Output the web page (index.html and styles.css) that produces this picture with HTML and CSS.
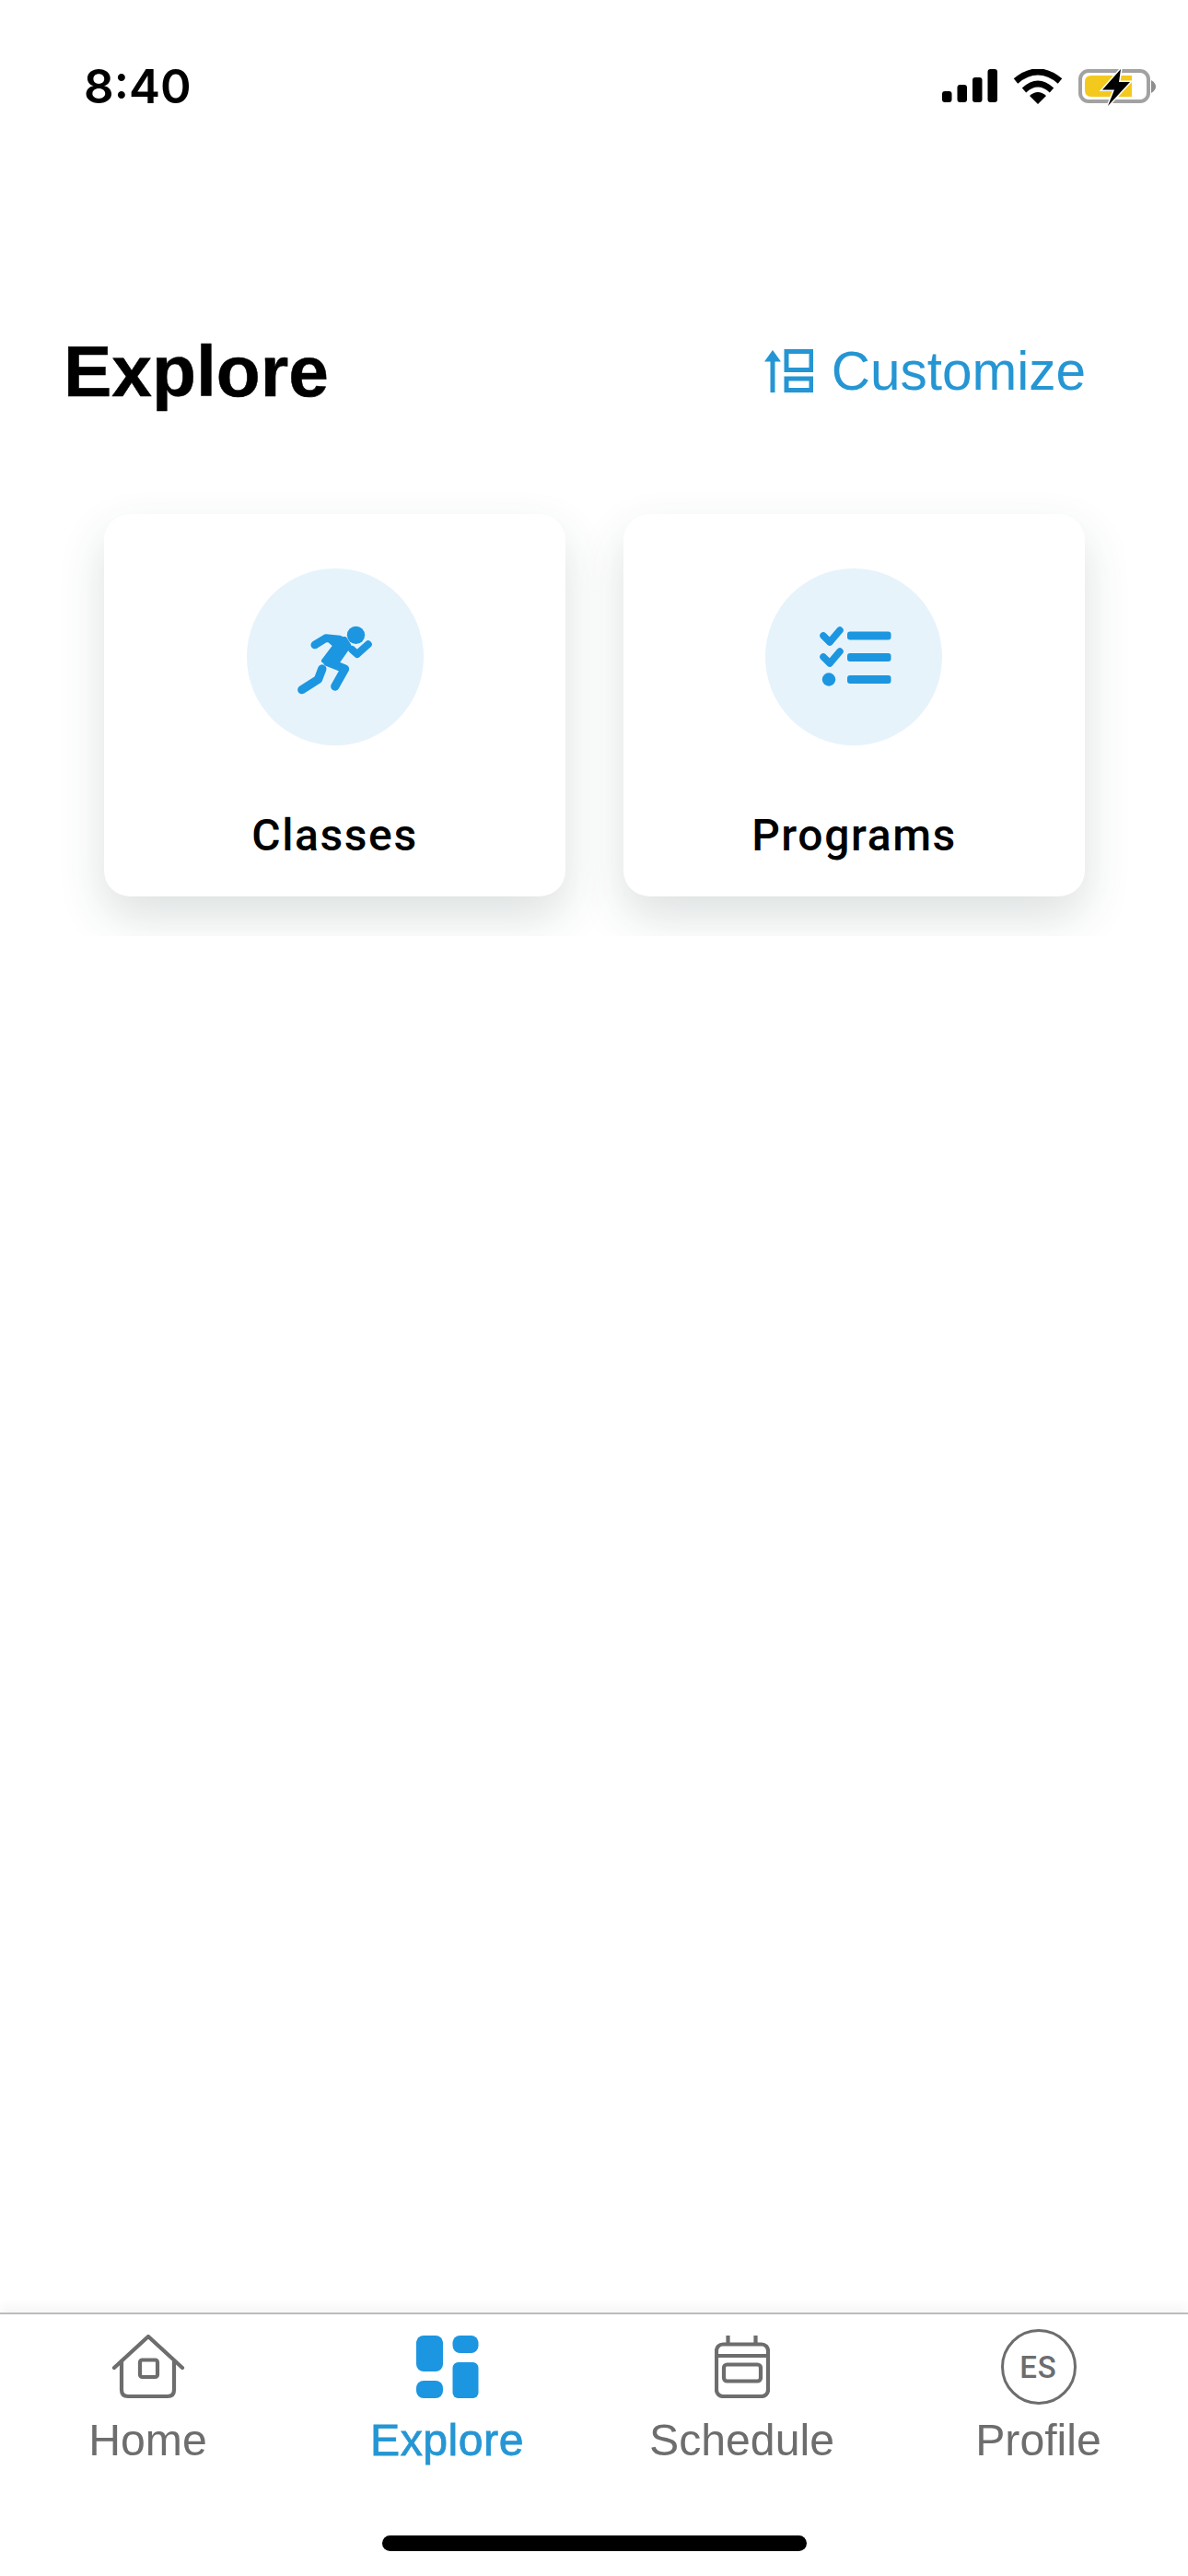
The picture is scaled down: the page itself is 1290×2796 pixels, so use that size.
FILE: index.html
```html
<!DOCTYPE html>
<html lang="en">
<head>
<meta charset="utf-8">
<title>Explore</title>
<link rel="stylesheet" href="styles.css">
</head>
<body>
<div class="page">
  <header class="status">
    <span class="time">8:40</span>
    <div class="status-icons">
      <svg class="signal" width="60" height="36" viewBox="0 0 60 36"><rect x="0" y="24" width="10.5" height="12" rx="3"/><rect x="16.500" y="17" width="10.500" height="19" rx="3"/><rect x="33" y="9" width="10.500" height="27" rx="3"/><rect x="49.500" y="0" width="10.500" height="36" rx="3"/></svg>
      <svg class="wifi" width="54" height="38" viewBox="0 0 54 38"><path d="M3 13Q27 -7 51 13" fill="none" stroke="#000" stroke-width="7"/><path d="M12 23Q27 9 42 23" fill="none" stroke="#000" stroke-width="6.500"/><path d="M18 29Q27 21 36 29L27 38Z"/></svg>
      <svg class="battery" width="85" height="40" viewBox="0 0 85 40"><rect x="2" y="2" width="74" height="33" rx="9" fill="none" stroke="#a2a2a2" stroke-width="4"/><path d="M7 14Q7 7 14 7H58V30H14Q7 30 7 23Z" fill="#f4c91e"/><path d="M79 12Q84 15 84 19Q84 23 79 26Z" fill="#8d8d8d"/><path d="M46 0L26 22.500H39L32 40L56 14H44L46 0Z" stroke="#fff" stroke-width="3" paint-order="stroke"/></svg>
    </div>
  </header>

  <section class="title-row">
    <h1 class="title">Explore</h1>
    <a class="customize">
      <svg class="customize-icon" width="54" height="47" viewBox="0 0 54 47" fill="none" stroke="#2596d3" stroke-width="5"><path d="M10 47V8"/><path d="M1 13.500L10 1L19 13.500Z" fill="#2596d3" stroke="none"/><rect x="25" y="2.500" width="27" height="20"/><rect x="25" y="32" width="27" height="12.500"/></svg>
      <span>Customize</span>
    </a>
  </section>

  <section class="cards-clip">
    <div class="cards">
      <article class="card">
        <div class="disc">
          <svg width="192" height="192" viewBox="0 0 192 192">
            <g transform="translate(32.500 43) scale(.3333)" fill="none" stroke="#1c96e0" stroke-linecap="round" stroke-linejoin="round">
              <circle cx="258" cy="88" r="29" fill="#1c96e0" stroke="none"/>
              <path d="M124 120L160 98L205 102" stroke-width="26"/>
              <path d="M165 100L222 100L236 122L192 185L152 172L190 122Z" fill="#1c96e0" stroke-width="14"/>
              <path d="M165 175L222 198L190 255" stroke-width="28"/>
              <path d="M148 198L135 232L82 266" stroke-width="28"/>
              <path d="M245 135L262 150L298 118" stroke-width="24"/>
            </g>
          </svg>
        </div>
        <h2 class="card-label">Classes</h2>
      </article>
      <article class="card">
        <div class="disc disc-shifted">
          <svg width="192" height="192" viewBox="0 0 192 192" fill="#1c96e0">
            <path d="M63 73L70 80L81 67" fill="none" stroke="#1c96e0" stroke-width="7.500" stroke-linecap="round" stroke-linejoin="round"/>
            <path d="M63 96L70 103L81 90" fill="none" stroke="#1c96e0" stroke-width="7.500" stroke-linecap="round" stroke-linejoin="round"/>
            <circle cx="69" cy="120.500" r="7.200"/>
            <rect x="89" y="68.500" width="47.500" height="9" rx="3"/>
            <rect x="89" y="92" width="47.500" height="9" rx="3"/>
            <rect x="89" y="116" width="47.500" height="9" rx="3"/>
          </svg>
        </div>
        <h2 class="card-label">Programs</h2>
      </article>
    </div>
  </section>

  <div class="spacer"></div>

  <nav class="tabs">
    <a class="tab">
      <span class="tab-icon">
        <svg width="80" height="70" viewBox="0 0 80 70" fill="none" stroke="#6d6d6d" stroke-width="4.200" stroke-linecap="round" stroke-linejoin="round"><path d="M3 36L40 2L77 36"/><path d="M11 29V60Q11 67 18 67H61Q68 67 68 60V29"/><rect x="31" y="27.500" width="19" height="18.500" rx="2.500"/></svg>
      </span>
      <span class="tab-label">Home</span>
    </a>
    <a class="tab tab-active">
      <span class="tab-icon">
        <svg width="68" height="68" viewBox="0 0 68 68" fill="#1c96e0"><rect x="0" y="0" width="29" height="39" rx="8"/><rect x="0" y="49" width="29" height="19" rx="8"/><rect x="39.500" y="0" width="28" height="19" rx="8"/><rect x="39.500" y="29" width="28" height="39" rx="6"/></svg>
      </span>
      <span class="tab-label">Explore</span>
    </a>
    <a class="tab">
      <span class="tab-icon">
        <svg width="60" height="68" viewBox="0 0 60 68" fill="none" stroke="#6d6d6d" stroke-width="4.200" stroke-linejoin="round"><rect x="2" y="9.500" width="56" height="56.500" rx="7"/><path d="M2 22H58"/><path d="M14.500 0V9M44.500 0V9"/><rect x="10" y="31.500" width="40" height="18" rx="3.500"/></svg>
      </span>
      <span class="tab-label">Schedule</span>
    </a>
    <a class="tab tab-last">
      <span class="tab-icon">
        <span class="avatar">ES</span>
      </span>
      <span class="tab-label">Profile</span>
    </a>
  </nav>

  <footer class="home-row"><div class="home-bar"></div></footer>
</div>
</body>
</html>
```

FILE: styles.css
```css
* { box-sizing: border-box; }

html, body { margin: 0; padding: 0; background: #fff; }

.page {
  width: 1290px;
  height: 2796px;
  display: flex;
  flex-direction: column;
  overflow: hidden;
  font-family: "Liberation Sans", Arial, sans-serif;
}

.status {
  height: 180px;
  padding: 73px 34px 0 91px;
  display: flex;
  justify-content: space-between;
  align-items: flex-start;
}

.time {
  font-family: Inter, sans-serif;
  font-weight: 600;
  font-size: 51px;
  line-height: 42px;
  color: #000;
}

.status-icons {
  display: flex;
  align-items: flex-start;
  gap: 17px;
  padding-top: 2px;
}

.title-row {
  height: 350px;
  padding: 180px 111px 0 69px;
  display: flex;
  justify-content: space-between;
  align-items: flex-start;
}

.title {
  margin: 0;
  font-size: 78.500px;
  font-weight: 700;
  line-height: 86px;
  color: #000;
  -webkit-text-stroke: 0.5px #000;
}

.customize {
  display: flex;
  align-items: center;
  gap: 20px;
  height: 84px;
  color: #2596d3;
  font-size: 58.500px;
}

.cards-clip {
  height: 486px;
  padding-top: 28px;
  overflow: hidden;
}

.cards {
  display: flex;
  gap: 63px;
  padding: 0 112px 0 113px;
}

.card {
  width: 501px;
  height: 415px;
  padding-top: 59px;
  border-radius: 28px;
  background: #fff;
  box-shadow: 0 22px 50px rgba(40, 70, 60, 0.16);
  display: flex;
  flex-direction: column;
  align-items: center;
}

.disc {
  width: 192px;
  height: 192px;
  border-radius: 50%;
  background: #e6f3fb;
}

.disc-shifted { margin-right: 2px; }

.disc svg { display: block; }

.card-label {
  margin: 71px 0 0;
  font-family: Roboto, sans-serif;
  font-size: 48px;
  font-weight: 500;
  line-height: 54px;
  letter-spacing: 1.6px;
  color: #000;
}

.spacer { flex: 1; }

.tabs {
  height: 226px;
  border-top: 2px solid #bdbdbd;
  box-shadow: 0 -8px 10px rgba(0, 0, 0, 0.035);
  display: grid;
  grid-template-columns: 321px 329px 311px 329px;
  background: #fff;
}

.tab {
  display: flex;
  flex-direction: column;
  align-items: center;
  color: #6d6d6d;
}

.tab-last { padding-left: 4px; }

.tab-icon {
  margin-top: 15px;
  height: 84px;
  display: flex;
  align-items: center;
  justify-content: center;
}

.tab-label {
  margin-top: 10px;
  font-size: 48.200px;
  line-height: 54px;
}

.tab-active { color: #2596d3; }
.tab-active .tab-label {
  letter-spacing: 0.5px;
  -webkit-text-stroke: 0.8px #2596d3;
}

.avatar {
  width: 82px;
  height: 82px;
  border: 3.500px solid #6d6d6d;
  border-radius: 50%;
  display: flex;
  align-items: center;
  justify-content: center;
  font-family: Roboto, sans-serif;
  font-size: 33px;
  font-weight: 500;
  letter-spacing: 1px;
  color: #6d6d6d;
}

.home-row {
  height: 60px;
  padding: 16px 414px 0 415px;
  background: #fff;
}

.home-bar {
  height: 17px;
  border-radius: 9px;
  background: #000;
}
```
